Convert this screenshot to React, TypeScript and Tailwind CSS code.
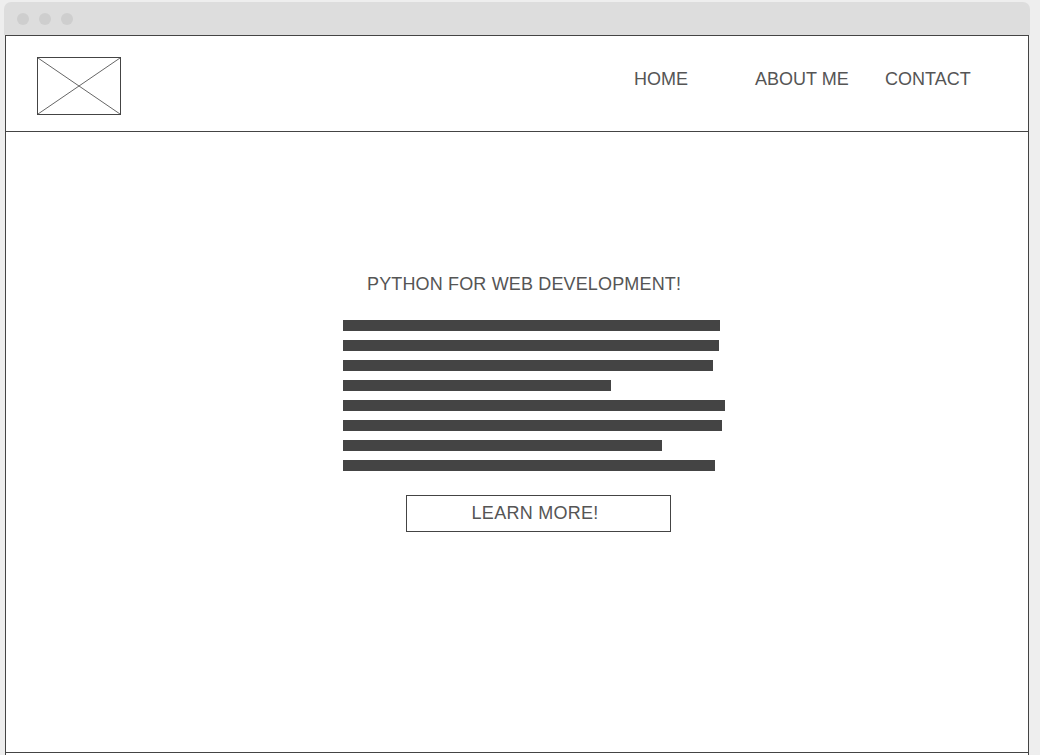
import React from 'react';

// Placeholder lines standing in for the hero paragraph (pixel widths).
const heroLines = [377, 376, 370, 268, 382, 379, 319, 372];

const navItems = [
  { label: 'HOME', width: 'w-[121px]' },
  { label: 'ABOUT ME', width: 'w-[130px]' },
  { label: 'CONTACT', width: 'w-[86px]' },
];

const LogoPlaceholder = () => (
  <svg width="84" height="58" viewBox="0 0 84 58" className="block">
    <rect x="0.5" y="0.5" width="83" height="57" fill="white" stroke="#444" strokeWidth="1" />
    <line x1="1" y1="1" x2="83" y2="57" stroke="#666" strokeWidth="1" />
    <line x1="83" y1="1" x2="1" y2="57" stroke="#666" strokeWidth="1" />
  </svg>
);

export default function App() {
  return (
    <div
      className="h-[755px] w-[1040px] overflow-hidden bg-[#eeeeee] pl-[4px] pt-[2px]"
      style={{ fontFamily: '"Liberation Sans", Arial, sans-serif' }}
    >
      {/* browser chrome */}
      <div className="flex h-[33px] w-[1026px] items-center gap-[10px] rounded-t-[7px] bg-[#dddddd] pl-[13px]">
        <span className="h-[12px] w-[12px] rounded-full bg-[#cecece]" />
        <span className="h-[12px] w-[12px] rounded-full bg-[#cecece]" />
        <span className="h-[12px] w-[12px] rounded-full bg-[#cecece]" />
      </div>

      <div className="ml-[1px] w-[1024px] border-x border-t border-[#444] bg-white">
        {/* header */}
        <header className="flex h-[96px] items-start border-b border-[#444]">
          <div className="ml-[31px] mt-[21px]">
            <LogoPlaceholder />
          </div>
          <nav className="ml-auto mt-[33px] flex pr-[57px]">
            {navItems.map((item) => (
              <a key={item.label} className={`${item.width} whitespace-nowrap text-[18px] leading-[20px] text-[#555]`}>
                {item.label}
              </a>
            ))}
          </nav>
        </header>

        {/* hero */}
        <main className="h-[620px] pt-[142px]">
          <div className="ml-[337px] flex flex-col items-start">
            <h1 className="ml-[24px] whitespace-nowrap text-[18px] leading-[20px] tracking-[0.15px] text-[#555]">
              PYTHON FOR WEB DEVELOPMENT!
            </h1>
            <div className="mt-[26px] flex flex-col gap-[9px]">
              {heroLines.map((w, i) => (
                <div key={i} className="h-[11px] bg-[#444]" style={{ width: w }} />
              ))}
            </div>
            <button className="ml-[63px] mt-[24px] flex h-[37px] w-[265px] items-center justify-center border border-[#444] bg-white pb-[2px] pr-[7px] text-[18px] leading-[20px] tracking-[0.25px] text-[#555]">
              LEARN MORE!
            </button>
          </div>
        </main>

        <footer className="h-[40px] border-t border-[#444]" />
      </div>
    </div>
  );
}
